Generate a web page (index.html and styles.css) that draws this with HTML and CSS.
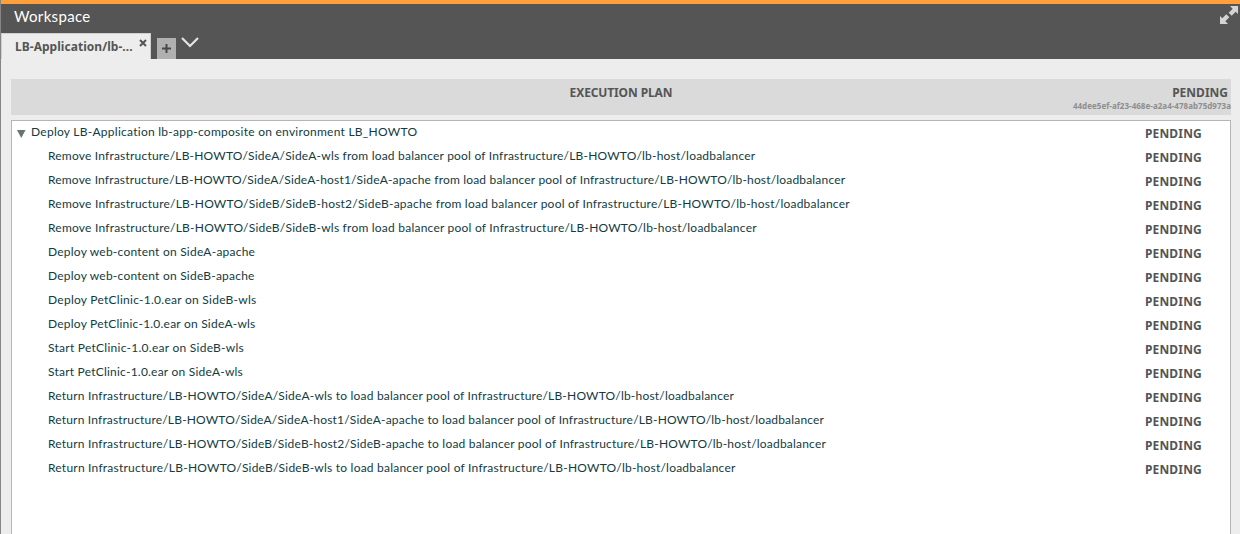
FILE: index.html
```html
<!DOCTYPE html>
<html lang="en">
<head>
<meta charset="utf-8">
<title>Workspace</title>
<link rel="stylesheet" href="styles.css">
</head>
<body>
<header class="top">
  <div class="titlebar"><h1 class="title">Workspace</h1>
    <svg class="expand" width="20" height="20" viewBox="0 0 20 20"><path d="M11 1h8v8l-2.300-2.300-4 4-3-3 4-4zM1 11l2.300 2.300 4-4 3 3-4 4L9 19H1z"/></svg>
  </div>
  <nav class="tabs">
    <div class="tab"><span class="tab-name">LB-Application/lb-...</span><svg class="close" width="8" height="8" viewBox="0 0 8 8"><path d="M1 1l6 6M7 1L1 7"/></svg></div>
    <button class="add"><svg width="9" height="9" viewBox="0 0 9 9"><path d="M4.500 0v9M0 4.500h9"/></svg></button>
    <svg class="chevron" width="18" height="11" viewBox="0 0 18 11"><path d="M1 1l8 8 8-8"/></svg>
  </nav>
</header>
<main class="content">
  <section class="plan-head">
    <h2 class="plan-title">EXECUTION PLAN</h2>
    <div class="plan-state"><span class="plan-status">PENDING</span><span class="plan-id">44dee5ef-af23-468e-a2a4-478ab75d973a</span></div>
  </section>
  <section class="steps">
    <div class="row root"><svg class="arrow" width="9" height="8" viewBox="0 0 9 8"><path d="M0 0h8.500L4.250 8z"/></svg><span class="step loose">Deploy LB-Application lb-app-composite on environment LB_HOWTO</span><span class="status">PENDING</span></div>
    <div class="row"><span class="step">Remove Infrastructure/LB-HOWTO/SideA/SideA-wls from load balancer pool of Infrastructure/LB-HOWTO/lb-host/loadbalancer</span><span class="status">PENDING</span></div>
    <div class="row"><span class="step tight">Remove Infrastructure/LB-HOWTO/SideA/SideA-host1/SideA-apache from load balancer pool of Infrastructure/LB-HOWTO/lb-host/loadbalancer</span><span class="status">PENDING</span></div>
    <div class="row"><span class="step medium">Remove Infrastructure/LB-HOWTO/SideB/SideB-host2/SideB-apache from load balancer pool of Infrastructure/LB-HOWTO/lb-host/loadbalancer</span><span class="status">PENDING</span></div>
    <div class="row"><span class="step medium">Remove Infrastructure/LB-HOWTO/SideB/SideB-wls from load balancer pool of Infrastructure/LB-HOWTO/lb-host/loadbalancer</span><span class="status">PENDING</span></div>
    <div class="row"><span class="step medium">Deploy web-content on SideA-apache</span><span class="status">PENDING</span></div>
    <div class="row"><span class="step medium">Deploy web-content on SideB-apache</span><span class="status">PENDING</span></div>
    <div class="row"><span class="step loose">Deploy PetClinic-1.0.ear on SideB-wls</span><span class="status">PENDING</span></div>
    <div class="row"><span class="step medium">Deploy PetClinic-1.0.ear on SideA-wls</span><span class="status">PENDING</span></div>
    <div class="row"><span class="step loose">Start PetClinic-1.0.ear on SideB-wls</span><span class="status">PENDING</span></div>
    <div class="row"><span class="step medium">Start PetClinic-1.0.ear on SideA-wls</span><span class="status">PENDING</span></div>
    <div class="row"><span class="step">Return Infrastructure/LB-HOWTO/SideA/SideA-wls to load balancer pool of Infrastructure/LB-HOWTO/lb-host/loadbalancer</span><span class="status">PENDING</span></div>
    <div class="row"><span class="step tight">Return Infrastructure/LB-HOWTO/SideA/SideA-host1/SideA-apache to load balancer pool of Infrastructure/LB-HOWTO/lb-host/loadbalancer</span><span class="status">PENDING</span></div>
    <div class="row"><span class="step">Return Infrastructure/LB-HOWTO/SideB/SideB-host2/SideB-apache to load balancer pool of Infrastructure/LB-HOWTO/lb-host/loadbalancer</span><span class="status">PENDING</span></div>
    <div class="row"><span class="step medium">Return Infrastructure/LB-HOWTO/SideB/SideB-wls to load balancer pool of Infrastructure/LB-HOWTO/lb-host/loadbalancer</span><span class="status">PENDING</span></div>
  </section>
</main>
</body>
</html>
```

FILE: styles.css
```css
* { box-sizing: border-box; }
body {
  margin: 0;
  height: 534px;
  overflow: hidden;
  display: flex;
  flex-direction: column;
  background: #ededed;
  border-left: 1px solid #858585;
  font-family: "Noto Sans", "Open Sans", sans-serif;
  color: #555;
}
h1, h2 { margin: 0; }
.top { flex: none; height: 59px; background: #555; border-top: 4px solid #ffa03c; }
.titlebar { height: 29px; display: flex; justify-content: space-between; padding: 0 1px 0 13px; }
.title { font: 400 15px/24px Lato, sans-serif; letter-spacing: 0.33px; color: #fff; }
.expand { margin: 1px 0 0; fill: #d4d4d4; }
.tabs { height: 26px; display: flex; }
.tab { width: 150px; height: 26px; display: flex; background: #ededed; border: 1px solid #d0d0d0; border-bottom: 0; padding-left: 13px; }
.tab-name { width: 124px; font-size: 12px; line-height: 26px; font-weight: 700; letter-spacing: 0.04px; white-space: nowrap; }
.close { margin-top: 5px; stroke: #555; stroke-width: 2; }
.add { width: 19px; height: 21px; margin: 5px 0 0 6px; padding: 0; border: 0; display: flex; align-items: center; justify-content: center; background: #b0b0b0; }
.add path { stroke: #484848; stroke-width: 2; }
.chevron { margin: 4px 0 0 5px; fill: none; stroke: #e4e4e4; stroke-width: 2.2; }
.content { flex: 1; min-height: 0; padding: 20px 9px 0 10px; display: flex; flex-direction: column; }
.plan-head { flex: none; height: 36px; display: grid; grid-template-columns: 1fr auto 1fr; background: #dadada; }
.plan-title { grid-column: 2; font-size: 12px; line-height: 27px; font-weight: 700; letter-spacing: -0.12px; }
.plan-state { display: flex; flex-direction: column; align-items: flex-end; font-weight: 700; }
.plan-status { font-size: 12px; line-height: 27px; height: 22px; padding-right: 3px; }
.plan-id { font-size: 8px; line-height: 10px; letter-spacing: 0.03px; color: #8e8e8e; }
.steps { flex: 1; min-height: 0; margin-top: 5px; background: #fff; border: 1px solid #b5b5b5; border-bottom: 0; }
.row { height: 24px; display: flex; padding: 0 28px 0 36px; }
.root { padding-left: 5px; }
.arrow { margin: 9px 5px 0 0; fill: #69736f; }
.step { flex: 1; font: 12px/22px Lato, sans-serif; color: #123b43; white-space: nowrap; letter-spacing: 0.2px; }
.step.tight { letter-spacing: 0.175px; }
.step.medium { letter-spacing: 0.22px; }
.step.loose { letter-spacing: 0.26px; }
.status { font-size: 12px; line-height: 25px; font-weight: 700; letter-spacing: 0.18px; }
```
